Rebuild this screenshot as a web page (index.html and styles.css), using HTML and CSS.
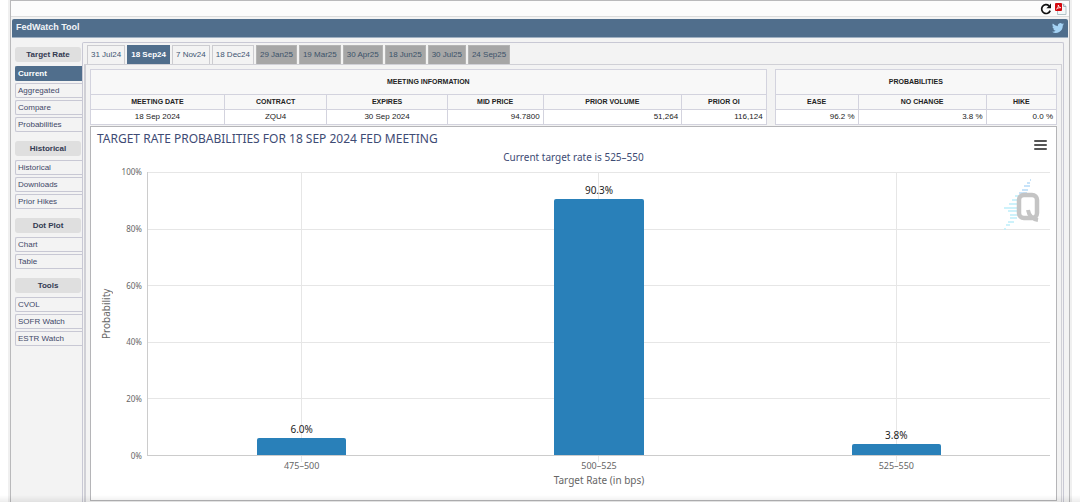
FILE: index.html
```html
<!DOCTYPE html>
<html lang="en">
<head>
<meta charset="utf-8">
<title>FedWatch Tool</title>
<link rel="stylesheet" href="styles.css">
</head>
<body>
<div class="frame">
  <div class="toolbar">
    <button class="icon-button" type="button" aria-label="Refresh">
      <svg width="12" height="12" viewBox="0 0 12 12"><path d="M10.2 7.6A4.4 4.4 0 1 1 9 2.8" fill="none" stroke="#111" stroke-width="1.7"/><path d="M11 .6v4.6H6.4z" fill="#111"/></svg>
    </button>
    <button class="icon-button" type="button" aria-label="Export to PDF">
      <svg width="12" height="12" viewBox="0 0 12 12"><path d="M2.500 1h6l2.500 2.500V11.500h-8.500z" fill="#f4f7f8" stroke="#b4c4c9"/><path d="M8.500 1v2.500H11" fill="none" stroke="#9fb0b6"/><rect x="0" y="0" width="7" height="8" rx="1" fill="#d4060c"/><path d="M1.500 6C3 5 3.500 3.500 3.300 2c.4 1.600 1 2.500 2.500 2.700-1.500 0-3 .3-4.300 1.300z" fill="none" stroke="#fff" stroke-width=".8"/></svg>
    </button>
  </div>
  <header class="titlebar">
    <h1 class="titlebar-text">FedWatch Tool</h1>
    <a class="twitter" href="#" aria-label="Twitter">
      <svg width="12" height="12" viewBox="0 0 24 24"><path fill="#a5d3f5" d="M24 4.600a10 10 0 0 1-2.800.8 5 5 0 0 0 2.100-2.700 10 10 0 0 1-3.100 1.200 4.900 4.900 0 0 0-8.400 4.500A14 14 0 0 1 1.700 3.200a4.900 4.900 0 0 0 1.500 6.500 4.900 4.900 0 0 1-2.200-.6 4.900 4.900 0 0 0 3.900 4.900 5 5 0 0 1-2.200.1 4.900 4.900 0 0 0 4.600 3.400A9.900 9.900 0 0 1 0 19.500 14 14 0 0 0 21.500 7.100 10 10 0 0 0 24 4.600z"/></svg>
    </a>
  </header>
  <div class="body">
    <nav class="sidebar" aria-label="Views">
      <section class="group">
        <h2 class="group-title">Target Rate</h2>
        <a class="item item-active" href="#">Current</a>
        <a class="item" href="#">Aggregated</a>
        <a class="item" href="#">Compare</a>
        <a class="item" href="#">Probabilities</a>
      </section>
      <section class="group">
        <h2 class="group-title">Historical</h2>
        <a class="item" href="#">Historical</a>
        <a class="item" href="#">Downloads</a>
        <a class="item" href="#">Prior Hikes</a>
      </section>
      <section class="group">
        <h2 class="group-title">Dot Plot</h2>
        <a class="item" href="#">Chart</a>
        <a class="item" href="#">Table</a>
      </section>
      <section class="group">
        <h2 class="group-title">Tools</h2>
        <a class="item" href="#">CVOL</a>
        <a class="item" href="#">SOFR Watch</a>
        <a class="item" href="#">ESTR Watch</a>
      </section>
    </nav>
    <main class="main">
      <nav class="tabs" aria-label="Meetings">
        <a class="tab" href="#">31 Jul24</a>
        <a class="tab tab-active" href="#">18 Sep24</a>
        <a class="tab" href="#">7 Nov24</a>
        <a class="tab" href="#">18 Dec24</a>
        <a class="tab tab-far" href="#">29 Jan25</a>
        <a class="tab tab-far" href="#">19 Mar25</a>
        <a class="tab tab-far" href="#">30 Apr25</a>
        <a class="tab tab-far" href="#">18 Jun25</a>
        <a class="tab tab-far" href="#">30 Jul25</a>
        <a class="tab tab-far" href="#">24 Sep25</a>
      </nav>
      <div class="content">
        <div class="tables">
          <table class="data data-meeting">
            <colgroup><col class="w20"><col class="w15"><col class="w18"><col class="w14"><col class="w21"><col class="w12"></colgroup>
            <thead>
              <tr class="caption-row"><th colspan="6">MEETING INFORMATION</th></tr>
              <tr><th>MEETING DATE</th><th>CONTRACT</th><th>EXPIRES</th><th>MID PRICE</th><th>PRIOR VOLUME</th><th>PRIOR OI</th></tr>
            </thead>
            <tbody>
              <tr><td>18 Sep 2024</td><td>ZQU4</td><td>30 Sep 2024</td><td class="num">94.7800</td><td class="num">51,264</td><td class="num">116,124</td></tr>
            </tbody>
          </table>
          <table class="data data-prob">
            <colgroup><col class="w30"><col class="w45"><col class="w25"></colgroup>
            <thead>
              <tr class="caption-row"><th colspan="3">PROBABILITIES</th></tr>
              <tr><th>EASE</th><th>NO CHANGE</th><th>HIKE</th></tr>
            </thead>
            <tbody>
              <tr><td class="num">96.2 %</td><td class="num">3.8 %</td><td class="num">0.0 %</td></tr>
            </tbody>
          </table>
        </div>
        <section class="chart">
          <div class="chart-head">
            <h2 class="chart-title">TARGET RATE PROBABILITIES FOR 18 SEP 2024 FED MEETING</h2>
            <button class="menu" type="button" aria-label="Chart menu"><span class="menu-line"></span><span class="menu-line"></span><span class="menu-line"></span></button>
          </div>
          <p class="chart-subtitle">Current target rate is 525–550</p>
          <div class="chart-body">
            <div class="y-title">Probability</div>
            <div class="y-axis"><span>100%</span><span>80%</span><span>60%</span><span>40%</span><span>20%</span><span>0%</span></div>
            <div class="plot">
              <div class="slot"><span class="value">6.0%</span><div class="bar" style="height: 6%"></div></div>
              <div class="slot"><span class="value">90.3%</span><div class="bar" style="height: 90.3%"></div></div>
              <div class="slot"><span class="value">3.8%</span><div class="bar" style="height: 3.8%"></div></div>
              <svg class="watermark" width="40" height="56" viewBox="0 0 40 56">
                <g stroke-width="1.300">
                  <path stroke="#b5daf8" d="M27 4h1M24 7h3M21 10h6M19 14h6M16 17h8"/>
                  <path stroke="#bdeefa" d="M12 20h8M9 24h6M6 28h8M1 32h13M5 35h9M7 39h8M7 42h7M5 46h6M3 49h4M1 53h2"/>
                </g>
                <rect x="16" y="19" width="18" height="23" rx="5" fill="none" stroke="#c4c4c4" stroke-width="4.500"/>
                <path d="M25 34c1 6 4 9 10 10" fill="none" stroke="#c4c4c4" stroke-width="4"/>
              </svg>
            </div>
          </div>
          <div class="x-axis"><span>475–500</span><span>500–525</span><span>525–550</span></div>
          <p class="x-title">Target Rate (in bps)</p>
        </section>
      </div>
    </main>
  </div>
</div>
</body>
</html>
```
FILE: styles.css
```css
* { box-sizing: border-box; }

body {
  margin: 0;
  padding: 0 8px;
  background: #fff;
  color: #222;
  font: 8px/12px "Liberation Sans", Arial, sans-serif;
}

body::after {
  content: "";
  position: fixed;
  inset: auto 0 0 0;
  height: 7px;
  background: linear-gradient(rgba(0, 0, 0, 0), rgba(0, 0, 0, 0.07));
  pointer-events: none;
}

h1, h2, p { margin: 0; font-weight: normal; }
a { color: inherit; text-decoration: none; }
button { padding: 0; border: 0; background: none; cursor: pointer; }

.frame {
  display: flex;
  flex-direction: column;
  min-height: 100vh;
  margin: 0 2px;
  border: solid #b9b9bb;
  border-width: 1px 1px 0;
  background: #f3f3f3;
  box-shadow: 0 0 0 2px #f0f0f0;
}

.toolbar {
  display: flex;
  justify-content: flex-end;
  align-items: center;
  gap: 3px;
  height: 16px;
  padding-right: 2px;
  border-bottom: 1px solid #ddd;
  background: #fcfcfc;
}
.icon-button { display: flex; }

.titlebar {
  display: flex;
  justify-content: space-between;
  align-items: flex-start;
  height: 19px;
  margin: 2px 1px 0;
  padding: 1px 4px 0;
  border-bottom: 1px solid #9fb0c2;
  border-radius: 2px 2px 0 0;
  background: #506e8c;
}
.titlebar-text { color: #f2f5f8; font-size: 9px; font-weight: bold; line-height: 14px; }
.twitter { display: flex; padding-top: 2px; }

.body { display: flex; flex: 1; padding: 4px 5px 0 4px; }

.sidebar {
  display: flex;
  flex-direction: column;
  gap: 9px;
  width: 67px;
  padding-top: 5px;
}
.group { display: flex; flex-direction: column; gap: 2px; }
.group-title {
  height: 15px;
  margin: 0 1px 2px 0;
  border-radius: 3px;
  background: #dfdfdf;
  color: #333a52;
  font-size: 8px;
  font-weight: bold;
  line-height: 15px;
  text-align: center;
}
.item {
  height: 15px;
  padding-left: 2px;
  border: 1px solid #c8c8d4;
  border-right: 0;
  border-radius: 2px 0 0 2px;
  color: #3f4868;
  line-height: 13px;
}
.item-active { border-color: #506e8c; background: #506e8c; color: #fff; font-weight: bold; }

.main {
  display: flex;
  flex: 1;
  flex-direction: column;
  min-width: 0;
  padding: 2px 1px 0;
  border: solid #c8c8d4;
  border-width: 1px 1px 0;
  border-radius: 2px 2px 0 0;
}

.tabs { display: flex; gap: 2px; padding-left: 3px; }
.tab {
  height: 19px;
  padding: 0 3px;
  border: 1px solid #ccccd0;
  border-bottom: 0;
  color: #3e5572;
  line-height: 18px;
  white-space: nowrap;
}
.tab-active { border-color: #506e8c; background: #506e8c; color: #fff; font-weight: bold; }
.tab-far { border-color: #b4b4b4; background: #a6a6a6; color: #3b5269; }

.content {
  flex: 1;
  padding: 4px 4px 2px;
  border: solid #d0d0d6;
  border-width: 1px 1px 0 2px;
}

.tables { display: grid; grid-template-columns: 678fr 283fr; gap: 8px; }
.data { width: 100%; border-collapse: collapse; table-layout: fixed; background: #fff; }
.data th, .data td {
  height: 15px;
  padding: 0 3px;
  border: 1px solid #d3d3de;
  line-height: 12px;
  text-align: center;
  white-space: nowrap;
}
.data th { background: #f8f8f8; font-size: 7px; font-weight: bold; }
.data .caption-row th { height: 25px; }
.data .num { text-align: right; }
.w12 { width: 12.5%; }
.w14 { width: 14.2%; }
.w15 { width: 15.2%; }
.w18 { width: 17.8%; }
.w20 { width: 19.8%; }
.w21 { width: 20.5%; }
.w30 { width: 29.5%; }
.w45 { width: 45.5%; }
.w25 { width: 25%; }

.chart {
  margin-top: 1px;
  padding: 3px 6px 12px;
  border: 1px solid #b5b5b8;
  background: #fff;
  color: #666;
  font-family: "Noto Sans", "Open Sans", sans-serif;
}
.chart-head { display: flex; justify-content: space-between; align-items: flex-start; height: 20px; }
.chart-title { color: #3e4b74; font-size: 12px; line-height: 18px; }
.menu {
  display: flex;
  flex-direction: column;
  gap: 2px;
  align-self: flex-end;
  margin-right: 3px;
}
.menu-line { width: 13px; height: 2px; border-radius: 1px; background: #555; }
.chart-subtitle { color: #3e4b74; font-size: 10px; line-height: 14px; text-align: center; }

.chart-body { display: flex; height: 284px; margin-top: 8px; }
.y-title {
  width: 18px;
  font-size: 10px;
  line-height: 18px;
  text-align: center;
  writing-mode: vertical-rl;
  transform: rotate(180deg);
}
.y-axis {
  display: flex;
  flex-direction: column;
  justify-content: space-between;
  width: 32px;
  margin: -6px 0;
  padding-right: 5px;
  line-height: 12px;
  text-align: right;
}
.plot {
  position: relative;
  display: flex;
  flex: 1;
  padding: 0 5px;
  border: solid #ccc;
  border-width: 0 0 1px 1px;
  background: repeating-linear-gradient(#e6e6e6 0 1px, transparent 1px 20%);
}
.slot {
  display: flex;
  flex: 1;
  flex-direction: column;
  justify-content: flex-end;
  align-items: center;
  background: linear-gradient(#e6e6e6, #e6e6e6) center / 1px 100% no-repeat;
}
.value { margin-bottom: 3px; color: #222; font-size: 10px; line-height: 12px; }
.bar { width: 30%; border-radius: 2px 2px 0 0; background: #2980b9; }
.watermark { position: absolute; top: 4px; right: 7px; }

.x-axis { display: flex; margin-left: 51px; padding: 0 5px; }
.x-axis span {
  flex: 1;
  padding-top: 4px;
  background: linear-gradient(#e6e6e6, #e6e6e6) top / 1px 6px no-repeat;
  font-size: 9px;
  line-height: 12px;
  text-align: center;
}
.x-title { margin-left: 51px; font-size: 10px; line-height: 16px; text-align: center; }
```
